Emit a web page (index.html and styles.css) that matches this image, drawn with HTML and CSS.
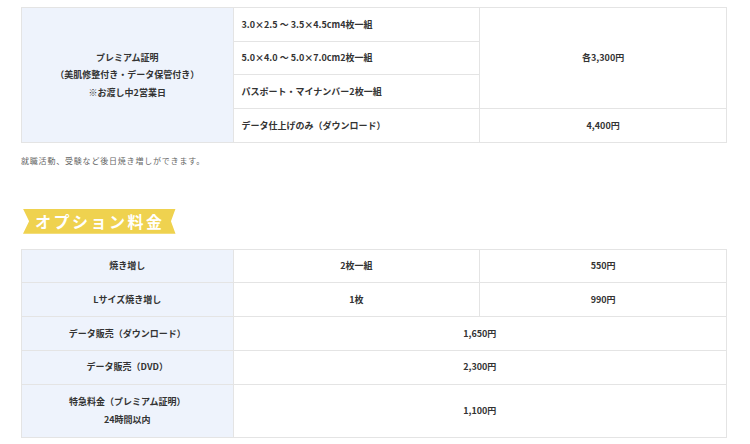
FILE: index.html
```html
<!DOCTYPE html>
<html lang="ja">
<head>
<meta charset="utf-8">
<link rel="stylesheet" href="styles.css">
</head>
<body>
<div class="page">
  <table class="price">
    <colgroup><col class="c1"><col class="c2"><col class="c3"></colgroup>
    <tr>
      <th rowspan="4">プレミアム証明<br>（美肌修整付き・データ保管付き）<br>※お渡し中2営業日</th>
      <td class="left">3.0×2.5 〜 3.5×4.5cm4枚一組</td>
      <td rowspan="3">各3,300円</td>
    </tr>
    <tr><td class="left">5.0×4.0 〜 5.0×7.0cm2枚一組</td></tr>
    <tr><td class="left">パスポート・マイナンバー2枚一組</td></tr>
    <tr><td class="left">データ仕上げのみ（ダウンロード）</td><td>4,400円</td></tr>
  </table>
  <p class="note">就職活動、受験など後日焼き増しができます。</p>
  <h2 class="ribbon">オプション料金</h2>
  <table class="price">
    <colgroup><col class="c1"><col class="c2"><col class="c3"></colgroup>
    <tr><th>焼き増し</th><td>2枚一組</td><td>550円</td></tr>
    <tr><th>Lサイズ焼き増し</th><td>1枚</td><td>990円</td></tr>
    <tr><th>データ販売（ダウンロード）</th><td colspan="2">1,650円</td></tr>
    <tr><th>データ販売（DVD）</th><td colspan="2">2,300円</td></tr>
    <tr class="tall"><th>特急料金（プレミアム証明）<br>24時間以内</th><td colspan="2">1,100円</td></tr>
  </table>
</div>
</body>
</html>
```
FILE: styles.css
```css
html, body {
  margin: 0;
  padding: 0;
  background: #fff;
}
body {
  font-family: "Noto Sans CJK JP", "Noto Sans", sans-serif;
  color: #333;
}
.page {
  padding: 7px 23px 0 21px;
}
.price {
  width: 100%;
  border-collapse: collapse;
  table-layout: fixed;
  font-size: 9px;
  font-weight: 700;
}
.c1 { width: 30%; }
.c2 { width: 35%; }
.c3 { width: 35%; }
.price th,
.price td {
  border: 1px solid #e4e4e4;
  height: 32.7px;
  padding: 0 8px;
  text-align: center;
  vertical-align: middle;
  line-height: 17.5px;
}
.price th {
  background: #eef3fc;
  font-weight: 700;
}
.price td.left {
  text-align: left;
}
.price tr.tall th,
.price tr.tall td {
  height: 52px;
}
.note {
  margin: 11px 0 0;
  font-size: 8px;
  letter-spacing: 0.8px;
  color: #666;
  line-height: 14px;
}
.ribbon {
  display: inline-block;
  margin: 41px 0 15px 2px;
  padding: 0 11px 0 12px;
  height: 25px;
  line-height: 25px;
  background: #efd24f;
  color: #fff;
  font-size: 16px;
  font-weight: 700;
  letter-spacing: 2.5px;
  clip-path: polygon(0 0, 100% 0, 97% 50%, 100% 100%, 0 100%, 4% 50%);
}
```
